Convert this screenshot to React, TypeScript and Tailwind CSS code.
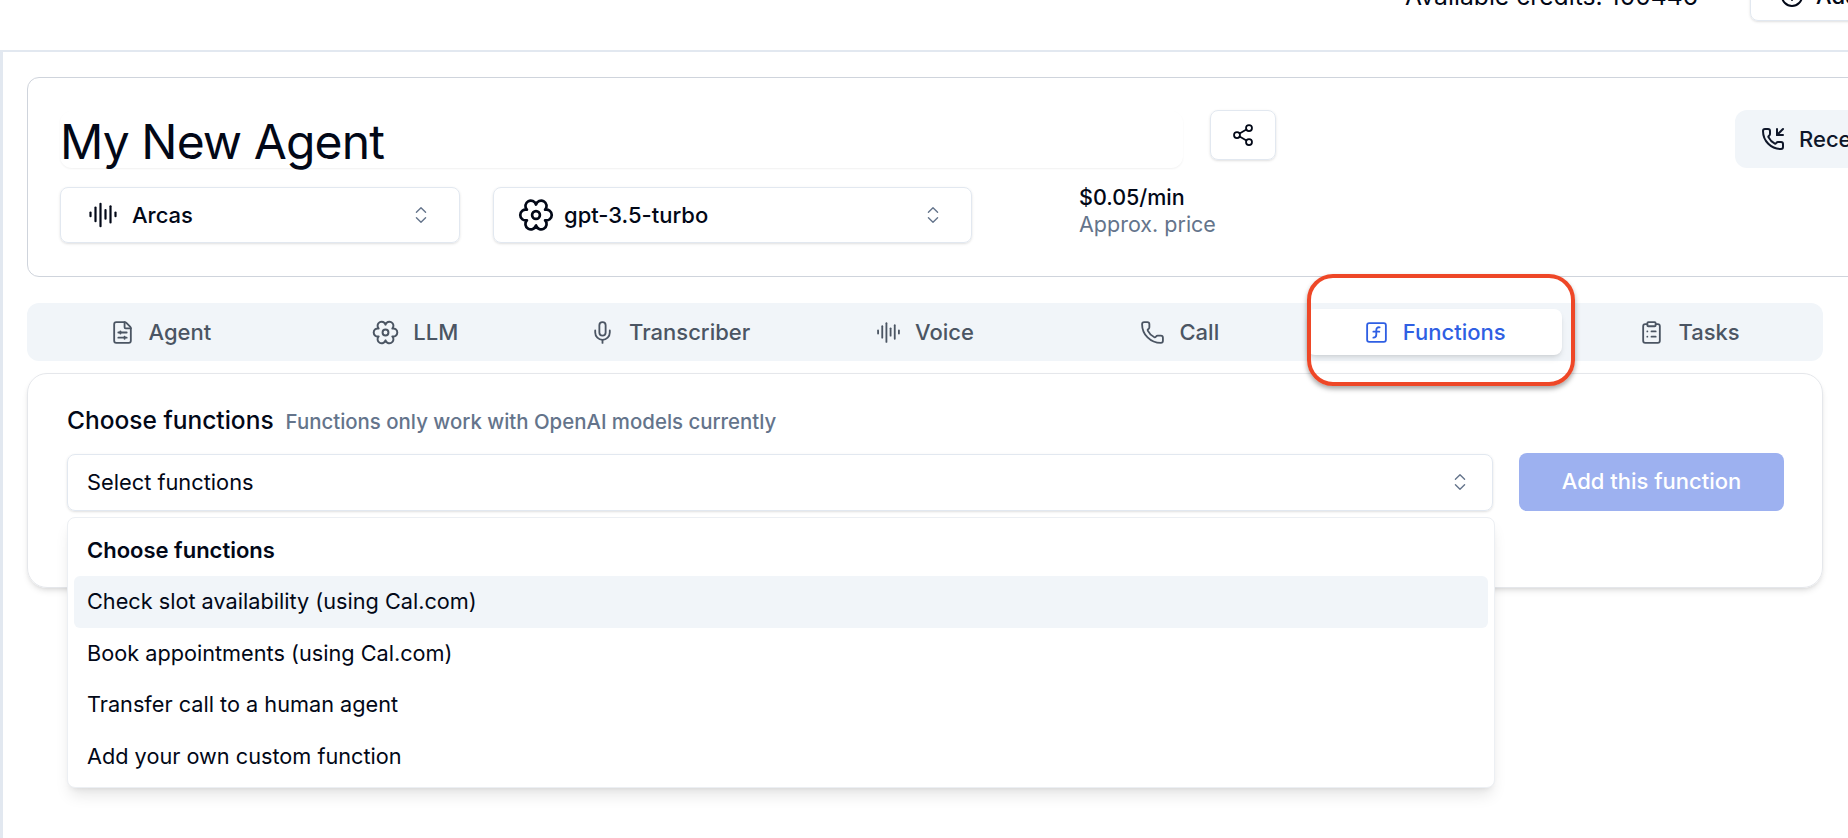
import { useState } from 'react';
import {
  AudioLines,
  ChevronsUpDown,
  CirclePlus,
  ClipboardList,
  FileSliders,
  Mic,
  Phone,
  PhoneIncoming,
  Share2,
  SquareFunction,
} from 'lucide-react';

// six-lobed cog used for the LLM, no icon package has this exact outline
function FlowerCog({ className, strokeWidth = 2 }: { className?: string; strokeWidth?: number }) {
  return (
    <svg
      viewBox="0 0 24 24"
      fill="none"
      stroke="currentColor"
      strokeWidth={strokeWidth}
      strokeLinejoin="round"
      className={className}
    >
      <path d="M12 5A3.6 3.6 0 1 1 18.06 8.5A3.6 3.6 0 1 1 18.06 15.5A3.6 3.6 0 1 1 12 19A3.6 3.6 0 1 1 5.94 15.5A3.6 3.6 0 1 1 5.94 8.5A3.6 3.6 0 1 1 12 5Z" />
      <circle cx="12" cy="12" r="2.6" />
    </svg>
  );
}

const tabs = [
  { name: 'Agent', icon: FileSliders, iconClass: 'size-[25px]' },
  { name: 'LLM', icon: FlowerCog, iconClass: 'size-[27px]' },
  { name: 'Transcriber', icon: Mic, iconClass: 'size-[25px]' },
  { name: 'Voice', icon: AudioLines, iconClass: 'size-[25px]' },
  { name: 'Call', icon: Phone, iconClass: 'size-[25px]' },
  { name: 'Functions', icon: SquareFunction, iconClass: 'size-[25px]' },
  { name: 'Tasks', icon: ClipboardList, iconClass: 'size-[25px]' },
];

const functions = [
  'Check slot availability (using Cal.com)',
  'Book appointments (using Cal.com)',
  'Transfer call to a human agent',
  'Add your own custom function',
];

export default function App() {
  const [activeTab, setActiveTab] = useState('Functions');

  return (
    <div className="relative h-[838px] w-[1848px] overflow-hidden bg-white font-['Inter',sans-serif] text-[#020817]">
      {/* top bar, cut off by the top of the window */}
      <div className="h-[50px] overflow-hidden">
        <div className="-mt-[29px] flex h-[50px] w-[1880px] items-center justify-end">
          <span className="mt-[2px] mr-[52px] whitespace-nowrap text-[24.7px]">Available credits: 100446</span>
          <div className="flex h-[50px] w-[130px] shrink-0 items-center gap-3 rounded-lg border border-[#e2e8f0] pl-[29px] text-[22px] font-medium shadow-sm">
            <CirclePlus className="size-6 shrink-0" />
            <span className="whitespace-nowrap">Add</span>
          </div>
        </div>
      </div>

      <main className="h-[788px] border-t-2 border-l-[3px] border-[#e2e8f0] pt-[25px] pl-6">
        {/* agent header */}
        <section className="h-[200px] w-[1950px] rounded-xl border border-[#cfd4dc] pt-[33px] pl-8">
          <div className="flex items-start">
            <div className="flex h-[57px] w-[1123px] shrink-0 items-center rounded-xl pt-1 text-5xl leading-none tracking-[-0.9px] shadow-[0_1px_2px_rgba(0,0,0,0.06)]">
              My New Agent
            </div>
            <button className="-mt-px ml-[27px] flex h-[50px] w-[66px] shrink-0 items-center justify-center rounded-lg border border-[#e2e8f0] shadow-sm">
              <Share2 className="size-6" strokeWidth={1.75} />
            </button>
            <button className="-mt-px ml-[459px] flex h-[58px] w-[200px] shrink-0 items-center gap-[14px] rounded-xl bg-[#f1f5f9] pl-[26px] text-[22px] font-medium text-[#0f172a]">
              <PhoneIncoming className="size-6 shrink-0" />
              <span className="whitespace-nowrap">Receive call</span>
            </button>
          </div>

          <div className="mt-[19px] flex items-center">
            <div className="flex h-14 w-[400px] items-center rounded-lg border border-[#e2e8f0] pr-[27px] pl-[27px] text-[22px] font-medium shadow-sm">
              <AudioLines className="size-[30px] shrink-0" strokeWidth={1.75} />
              <span className="ml-[14px] flex-1">Arcas</span>
              <ChevronsUpDown className="size-[22px] text-[#64748b]" strokeWidth={1.5} />
            </div>
            <div className="ml-[33px] flex h-14 w-[479px] items-center rounded-lg border border-[#e2e8f0] pr-[27px] pl-6 text-[22px] font-medium shadow-sm">
              <FlowerCog className="size-[36px] shrink-0" strokeWidth={1.8} />
              <span className="ml-[10px] flex-1">gpt-3.5-turbo</span>
              <ChevronsUpDown className="size-[22px] text-[#64748b]" strokeWidth={1.5} />
            </div>
            <div className="-mt-2 ml-[107px] text-[21.5px] leading-[27px]">
              <p className="font-medium">$0.05/min</p>
              <p className="text-[#64748b]">Approx. price</p>
            </div>
          </div>
        </section>

        {/* tabs */}
        <nav className="mt-[26px] grid h-[58px] w-[1796px] grid-cols-7 rounded-xl bg-[#f1f5f9] p-1.5">
          {tabs.map((tab) => {
            const Icon = tab.icon;
            const active = tab.name === activeTab;
            return (
              <button
                key={tab.name}
                onClick={() => setActiveTab(tab.name)}
                className={
                  active
                    ? 'flex items-center justify-center gap-[14px] rounded-lg bg-white text-[22px] font-medium text-[#2f5fe3] shadow-md'
                    : 'flex items-center justify-center gap-[14px] rounded-lg text-[22px] font-medium text-[#4b5563]'
                }
              >
                <Icon className={tab.iconClass} strokeWidth={1.75} />
                {tab.name}
              </button>
            );
          })}
        </nav>

        {/* functions card */}
        <section className="relative mt-3 h-[215px] w-[1796px] rounded-[20px] border border-[#e5e7eb] pt-[29px] pl-[39px] shadow-md">
          <div className="flex items-baseline gap-3">
            <h2 className="text-[24.5px] leading-[34px] font-medium">Choose functions</h2>
            <span className="text-[20.4px] font-medium text-[#64748b]">Functions only work with OpenAI models currently</span>
          </div>
          <div className="mt-4 flex items-start gap-[26px]">
            <div className="flex h-[57px] w-[1426px] items-center justify-between rounded-lg border border-[#e2e8f0] pr-[21px] pl-[19px] text-[21.8px] shadow-sm">
              Select functions
              <ChevronsUpDown className="size-[22px] text-[#64748b]" strokeWidth={1.5} />
            </div>
            <button className="-mt-px h-[58px] w-[265px] rounded-lg bg-[#9db1f0] text-[22px] font-medium text-white">
              Add this function
            </button>
          </div>

          {/* open dropdown */}
          <div className="absolute top-[143px] left-[39px] z-10 h-[271px] w-[1428px] rounded-lg border border-[#eceff3] bg-white p-1.5 shadow-lg">
            <div className="flex h-[52px] items-center pt-px pl-[13px] text-[22px] font-semibold">Choose functions</div>
            {functions.map((fn, i) => (
              <div
                key={fn}
                className={
                  i === 0
                    ? 'flex h-[51.5px] items-center rounded-md bg-[#f1f5f9] pl-[13px] text-[21.7px]'
                    : 'flex h-[51.5px] items-center rounded-md pl-[13px] text-[21.7px]'
                }
              >
                {fn}
              </div>
            ))}
          </div>
        </section>
      </main>

      {/* red annotation around the Functions tab */}
      <div className="absolute top-[274px] left-[1307px] z-20 h-[112px] w-[268px] rounded-[26px] border-[4px] border-[#ee4727] shadow-[0_3px_5px_rgba(0,0,0,0.35)]" />
    </div>
  );
}
